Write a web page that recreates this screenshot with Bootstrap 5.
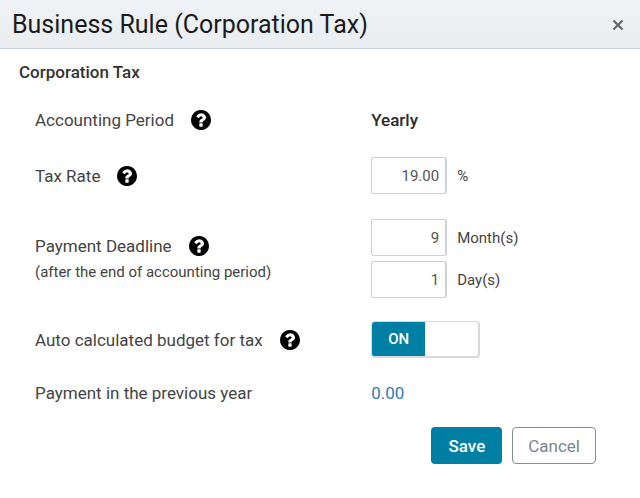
<!DOCTYPE html>
<html lang="en">
<head>
<meta charset="utf-8">
<meta name="viewport" content="width=device-width, initial-scale=1">
<title>Business Rule (Corporation Tax)</title>
<link href="https://cdn.jsdelivr.net/npm/bootstrap@5.3.0/dist/css/bootstrap.min.css" rel="stylesheet">
<style>
body { font-family: Roboto, "Liberation Sans", sans-serif; font-size: 17px; line-height: 24px; color: #444; background: #fff; }
.rule-head { padding: 9px 16px 7px 12px; background: linear-gradient(#eff3f6, #e9edf0); border-bottom: 1px solid #c8d1db; }
.rule-title { font-size: 25px; line-height: 32px; font-weight: 400; color: #1b1b1b; }
.x-btn { width: 12px; height: 12px; color: #666; line-height: 0; }
.section-name { font-size: 17px; line-height: 24px; font-weight: 500; color: #333; margin: 11px 20px 24px 19px; }
.rule-rows { gap: 23px; }
.fixed-top-rows { gap: 25px; }
.rule-label { width: 58%; padding-left: 35px; }
.rule-note, .unit { font-size: 15px; line-height: 24px; }
.rule-note { margin-top: 2px; }
.unit { margin-left: 10px; }
.help-btn { margin-left: 17px; line-height: 0; color: #000; }
.period { color: #2b2b2b; font-weight: 500; }
.num-box { width: 76px; height: 37px; padding: 0 6px; font-size: 15px; text-align: right; color: #555; border: 1px solid #c9d2da; border-right-width: 2px; border-radius: 3px; }
.pair { gap: 5px; }
.toggle { width: 109px; height: 37px; border: 1px solid #d9d9d9; border-width: 1px 2px 2px 1px; border-radius: 4px; background: #fff; }
.toggle-on { width: 50%; background: #007fa5; color: #fff; font-size: 15px; font-weight: 500; }
.amount { color: #337ab7; }
.action { height: 37px; padding: 0 16px; font-size: 17px; line-height: 24px; border-radius: 4px; }
.save { background: #007fa5; color: #fff; font-weight: 500; }
.cancel { padding: 0 15px; border: 1px solid #868e96; color: #7b858e; }
.actions { gap: 10px; margin: 22px 44px 24px 0; }
</style>
</head>
<body>
<svg class="d-none" aria-hidden="true">
  <symbol id="help" viewBox="0 0 1536 1536"><path fill="currentColor" d="M896 1248v-192q0-14-9-23t-23-9H672q-14 0-23 9t-9 23v192q0 14 9 23t23 9h192q14 0 23-9t9-23zm256-672q0-88-55.500-163t-138.500-116-170-41q-243 0-371 213-15 24 8 42l132 100q7 6 19 6 16 0 25-12 53-68 86-92 34-24 86-24 48 0 85.500 26t37.500 59q0 38-20 61t-68 45q-63 28-115.500 86.500T640 892v36q0 14 9 23t23 9h192q14 0 23-9t9-23q0-19 21.500-49.500T972 829q32-18 49-28.500t46-35 44.500-48 28-60.500 12.500-81zm384 192q0 209-103 385.500T1153.500 1433 768 1536t-385.500-103T103 1153.500 0 768t103-385.500T382.500 103 768 0t385.500 103T1433 382.500 1536 768z"/></symbol>
</svg>
<header class="rule-head d-flex align-items-center justify-content-between">
  <h1 class="rule-title mb-0">Business Rule (Corporation Tax)</h1>
  <button type="button" class="x-btn btn border-0 p-0" aria-label="Close"><svg width="12" height="12" viewBox="0 0 12 12"><path d="M1.500 1.500l9 9M10.500 1.500l-9 9" fill="none" stroke="currentColor" stroke-width="2.200"/></svg></button>
</header>
<main>
  <h2 class="section-name">Corporation Tax</h2>
  <form class="rule-rows d-flex flex-column">
    <div class="fixed-top-rows d-flex flex-column">
      <div class="d-flex align-items-center">
        <div class="rule-label d-flex align-items-center">Accounting Period
          <button type="button" class="help-btn btn border-0 p-0" aria-label="Help"><svg width="20" height="20"><use href="#help"/></svg></button></div>
        <strong class="period">Yearly</strong>
      </div>
      <div class="d-flex align-items-center">
        <div class="rule-label d-flex align-items-center"><label for="rate">Tax Rate</label>
          <button type="button" class="help-btn btn border-0 p-0" aria-label="Help"><svg width="20" height="20"><use href="#help"/></svg></button></div>
        <input id="rate" class="num-box" type="text" value="19.00">
        <label for="rate" class="unit">%</label>
      </div>
      <div class="d-flex align-items-center">
        <div class="rule-label">
          <div class="d-flex align-items-center">Payment Deadline
            <button type="button" class="help-btn btn border-0 p-0" aria-label="Help"><svg width="20" height="20"><use href="#help"/></svg></button></div>
          <div class="rule-note">(after the end of accounting period)</div>
        </div>
        <div class="pair d-flex flex-column">
          <div class="d-flex align-items-center"><input id="months" class="num-box" type="text" value="9"><label for="months" class="unit">Month(s)</label></div>
          <div class="d-flex align-items-center"><input id="days" class="num-box" type="text" value="1"><label for="days" class="unit">Day(s)</label></div>
        </div>
      </div>
    </div>
    <div class="d-flex align-items-center">
      <div class="rule-label d-flex align-items-center"><span id="auto-label">Auto calculated budget for tax</span>
        <button type="button" class="help-btn btn border-0 p-0" aria-label="Help"><svg width="20" height="20"><use href="#help"/></svg></button></div>
      <button type="button" role="switch" aria-checked="true" aria-labelledby="auto-label" class="toggle d-flex p-0 overflow-hidden"><span class="toggle-on h-100 d-flex align-items-center justify-content-center">ON</span></button>
    </div>
    <div class="d-flex align-items-center">
      <div class="rule-label">Payment in the previous year</div>
      <a href="#" class="amount text-decoration-none">0.00</a>
    </div>
  </form>
  <div class="actions d-flex justify-content-end">
    <button type="button" class="btn action save">Save</button>
    <button type="button" class="btn action cancel">Cancel</button>
  </div>
</main>
<script src="https://cdn.jsdelivr.net/npm/bootstrap@5.3.0/dist/js/bootstrap.bundle.min.js"></script>
</body>
</html>
